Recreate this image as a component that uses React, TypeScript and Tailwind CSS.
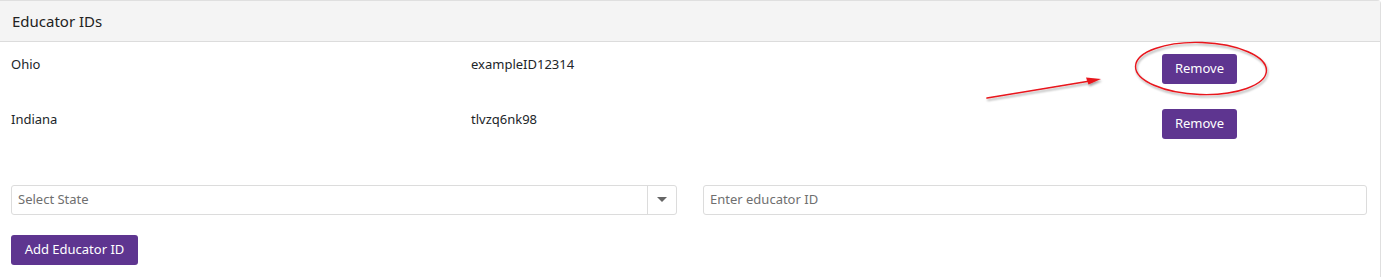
const ids = [
  { state: "Ohio", id: "exampleID12314" },
  { state: "Indiana", id: "tlvzq6nk98" },
];

function Annotation() {
  return (
    <svg
      className="pointer-events-none absolute left-0 top-0"
      width="1382"
      height="160"
      viewBox="0 0 1382 160"
    >
      <defs>
        <filter id="sh" x="-20%" y="-20%" width="140%" height="160%">
          <feDropShadow dx="1" dy="2" stdDeviation="1.2" floodColor="#000" floodOpacity="0.35" />
        </filter>
      </defs>
      <g filter="url(#sh)">
        <line x1="987" y1="98" x2="1090" y2="81" stroke="#e8141b" strokeWidth="1.6" strokeLinecap="round" />
        <path d="M1101 79 L1086 77.5 L1088.5 84.5 Z" fill="#e8141b" />
        <ellipse
          cx="1201"
          cy="68.5"
          rx="65.5"
          ry="26"
          fill="none"
          stroke="#e8141b"
          strokeWidth="1.4"
          transform="rotate(2 1201 68.5)"
        />
      </g>
    </svg>
  );
}

export default function App() {
  return (
    <div className="relative h-[277px] w-[1382px] bg-white font-['Noto_Sans','Open_Sans',sans-serif] text-[13px] text-[#212529]">
      <div className="h-full w-[1381px] rounded-tr-[4px] border-r border-t border-[#dfdfdf]">
        <div className="flex h-[41px] items-center border-b border-[#dcdcdc] bg-[#f4f4f4] pl-[12px] text-[15px] text-[#222]">
          Educator IDs
        </div>

        {ids.map((r) => (
          <div key={r.id} className="flex h-[55px] items-start pl-[11px] pt-[12px]">
            <div className="w-[460px] leading-[20px]">{r.state}</div>
            <div className="w-[691px] leading-[20px]">{r.id}</div>
            <button className="h-[30px] w-[75px] rounded-[3px] bg-[#5e3590] text-[13px] text-white">
              Remove
            </button>
          </div>
        ))}

        <div className="mt-[33px] flex gap-[26px] pl-[11px] pr-[13px]">
          <div className="flex h-[30px] w-[666px] items-center rounded-[3px] border border-[#dcdcdc]">
            <span className="flex-1 pl-[6px] text-[#6f6f6f]">Select State</span>
            <div className="flex h-full w-[29px] items-center justify-center border-l border-[#dcdcdc]">
              <svg width="10" height="6" viewBox="0 0 10 6">
                <path d="M0 0 L10 0 L5 5 Z" fill="#666" />
              </svg>
            </div>
          </div>
          <div className="flex h-[30px] flex-1 items-center rounded-[3px] border border-[#dcdcdc] pl-[6px] text-[#6f6f6f]">
            Enter educator ID
          </div>
        </div>

        <div className="mt-[20px] pl-[11px]">
          <button className="h-[30px] w-[127px] rounded-[3px] bg-[#5e3590] text-[13px] text-white">
            Add Educator ID
          </button>
        </div>
      </div>
      <Annotation />
    </div>
  );
}
